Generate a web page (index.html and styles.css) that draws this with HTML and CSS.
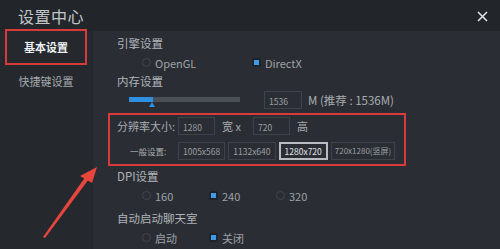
FILE: index.html
```html
<!DOCTYPE html>
<html lang="zh-CN">
<head>
<meta charset="UTF-8" />
<title>设置中心</title>
<link rel="stylesheet" href="styles.css">
</head>
<body>
<div class="window">
  <div class="titlebar">
    <span class="title">设置中心</span>
    <svg class="close" width="11" height="11" viewBox="0 0 11 11"><path d="M1 1L10 10M10 1L1 10" stroke="#e4e8ec" stroke-width="1.5"/></svg>
  </div>
  <div class="main">
    <div class="sidebar">
      <div class="nav-item active">基本设置</div>
      <div class="nav-item">快捷键设置</div>
    </div>
    <div class="content">
      <div class="heading">引擎设置</div>
      <div class="radio-row">
        <label class="opt wide"><span class="radio"></span>OpenGL</label>
        <label class="opt wide"><span class="radio on"></span>DirectX</label>
      </div>
      <div class="heading short">内存设置</div>
      <div class="mem-row">
        <div class="slider"><div class="fill"></div><div class="thumb"></div></div>
        <div class="box mem-box">1536</div>
        <span class="mem-note">M (推荐 : 1536M)</span>
      </div>
      <div class="res-panel">
        <div class="res-row">
          <span class="res-label">分辨率大小:</span>
          <div class="box">1280</div>
          <span class="unit">宽 x</span>
          <div class="box">720</div>
          <span class="unit">高</span>
        </div>
        <div class="res-row presets">
          <span class="res-label small">一般设置:</span>
          <div class="preset">1005x568</div>
          <div class="preset">1132x640</div>
          <div class="preset sel">1280x720</div>
          <div class="preset">720x1280(竖屏)</div>
        </div>
      </div>
      <div class="heading">DPI设置</div>
      <div class="radio-row">
        <label class="opt"><span class="radio"></span>160</label>
        <label class="opt"><span class="radio on"></span>240</label>
        <label class="opt"><span class="radio"></span>320</label>
      </div>
      <div class="heading gap">自动启动聊天室</div>
      <div class="radio-row">
        <label class="opt"><span class="radio"></span>启动</label>
        <label class="opt"><span class="radio on"></span>关闭</label>
      </div>
    </div>
  </div>
  <!-- annotation arrow -->
  <svg class="arrow" width="500" height="249" viewBox="0 0 500 249">
    <polygon points="43,237 45,238 89,179 86,176" fill="#e8453c"/>
    <polygon points="97,167 80,176 92,183" fill="#e8453c"/>
  </svg>
</div>
</body>
</html>
```

FILE: styles.css
```css
body {
  margin: 0;
  background: #2a2e34;
  font-family: "Noto Sans CJK SC", "Noto Sans", sans-serif;
}
.window {
  position: relative;
  width: 500px;
  height: 249px;
  overflow: hidden;
  background: #2a2e34;
  color: #b2b6ba;
}
.titlebar {
  height: 31px;
  background: #22262a;
  display: flex;
  align-items: center;
  justify-content: space-between;
  padding: 0 12px 0 18px;
  box-sizing: border-box;
}
.title {
  font-size: 16px;
  color: #c2c6ca;
  letter-spacing: 0.5px;
}
.close {
  margin-top: 1px;
}
.main {
  display: flex;
  height: 218px;
}
.sidebar {
  width: 93px;
  background: #25292e;
  padding: 0 6px 0 5px;
  box-sizing: border-box;
}
.nav-item {
  height: 32px;
  display: flex;
  align-items: center;
  justify-content: center;
  font-size: 11px;
  color: #a4a8ac;
}
.nav-item.active {
  margin-top: -2px;
  border: 2px solid #d93a3c;
  color: #eef0f2;
  font-weight: bold;
}
.content {
  flex: 1;
  padding: 2px 0 0 24px;
}
.heading {
  height: 20px;
  line-height: 20px;
  font-size: 11.5px;
  color: #b0b4b8;
}
.heading.short {
  height: 18px;
  line-height: 18px;
}
.heading.gap {
  margin-top: 3px;
}
.radio-row {
  height: 19px;
  display: flex;
  align-items: center;
  padding-left: 25px;
}
.opt {
  width: 67px;
  display: flex;
  align-items: center;
  font-size: 11px;
  color: #9ea2a6;
}
.opt.wide {
  width: 110px;
}
.radio {
  width: 7px;
  height: 7px;
  border: 1px solid #41464d;
  border-radius: 50%;
  margin-right: 4px;
}
.radio.on {
  width: 5px;
  height: 5px;
  border: 2px solid #1f2327;
  border-radius: 2px;
  background: #3c9ae6;
}
.mem-row {
  height: 19px;
  display: flex;
  align-items: center;
}
.slider {
  position: relative;
  width: 111px;
  height: 5px;
  margin: 0 24px 0 12px;
  background: #4a4f56;
}
.fill {
  width: 24px;
  height: 5px;
  background: #2f8fe0;
}
.thumb {
  position: absolute;
  left: 20px;
  top: 5px;
  width: 0;
  height: 0;
  border-left: 3px solid transparent;
  border-right: 3px solid transparent;
  border-bottom: 5px solid #2f8fe0;
}
.box {
  width: 37px;
  height: 18px;
  line-height: 18px;
  border: 1px solid #3d434a;
  box-sizing: border-box;
  padding-left: 4px;
  font-size: 8.5px;
  color: #9a9ea2;
}
.mem-box {
  width: 38px;
}
.mem-note {
  margin-left: 6px;
  font-size: 11.5px;
  color: #a8acb0;
}
.res-panel {
  margin: 4px 0 0 -9px;
  width: 298px;
  height: 53px;
  border: 2px solid #d93a3c;
  box-sizing: border-box;
  padding: 2px 0 0 7px;
}
.res-row {
  display: flex;
  align-items: center;
  height: 18px;
}
.res-row.presets {
  margin-top: 7px;
}
.res-label {
  width: 61px;
  font-size: 11px;
  color: #a8acb0;
}
.res-label.small {
  font-size: 8.5px;
  padding-left: 13px;
  box-sizing: border-box;
}
.unit {
  font-size: 11px;
  margin: 0 12px 0 7px;
  color: #a8acb0;
}
.preset {
  height: 18px;
  line-height: 16px;
  border: 1px solid #3d434a;
  box-sizing: border-box;
  padding: 0 4px;
  margin-right: 3px;
  font-size: 8.5px;
  color: #9a9ea2;
}
.preset.sel {
  border: 2px solid #b8bcc0;
  line-height: 14px;
  color: #e2e4e6;
  padding: 0 4px;
}
.preset:last-child {
  padding: 0 3px;
  font-size: 8px;
}
.arrow {
  position: absolute;
  left: 0;
  top: 0;
  pointer-events: none;
}
```
